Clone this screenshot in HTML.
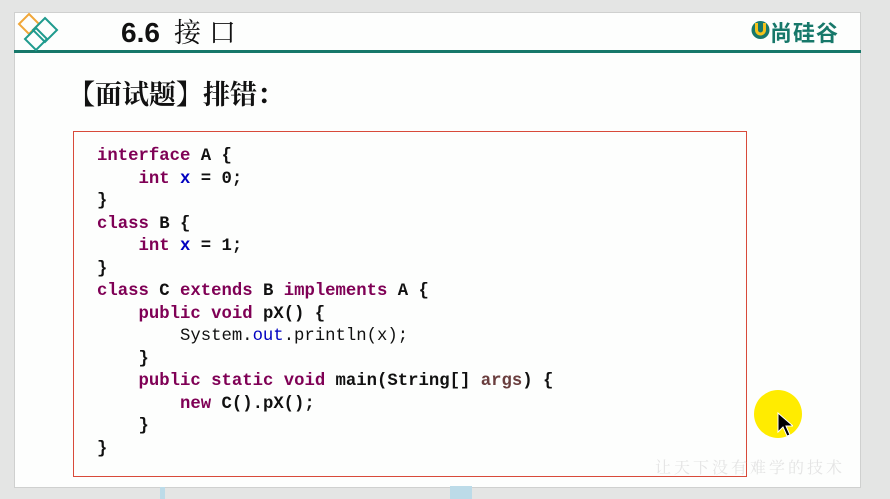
<!DOCTYPE html>
<html><head><meta charset="utf-8"><style>
*{margin:0;padding:0;box-sizing:border-box}
body{width:890px;height:499px;background:#e4e5e4;position:relative;overflow:hidden;font-family:"Liberation Sans","Noto Sans CJK SC",sans-serif}
.slide{position:absolute;left:14px;top:12px;width:847px;height:476px;background:#fdfefd;border:1px solid #cfd0cf}
.hline{position:absolute;left:14px;top:50px;width:847px;height:3px;background:#17786a}
.title{position:absolute;left:121px;top:13px;font-size:28px;font-weight:bold;color:#111;line-height:36px}
.title span{font-family:"Noto Serif CJK SC",serif;font-weight:normal;margin-left:14px;letter-spacing:8px;font-size:27px}
.q{position:absolute;left:68px;top:74px;font-size:27px;font-weight:bold;font-family:"Noto Serif CJK SC","Noto Sans CJK SC",serif;color:#111;line-height:38px}
.box{position:absolute;left:73px;top:131px;width:674px;height:346px;border:1px solid #d84a3a}
pre{position:absolute;left:97px;top:146px;font-family:"Liberation Mono",monospace;font-size:17.3px;line-height:22.5px;color:#111;font-weight:bold}
.n{font-weight:normal}
.k{color:#7f0055;font-weight:bold}.f{color:#0000c0}.a{color:#6a3e3e}
.logo{position:absolute;left:770px;top:16px;font-size:22px;color:#17786a;font-weight:bold;letter-spacing:1px}
.wm{position:absolute;left:655px;top:455px;font-size:16px;color:#e4e4e4;letter-spacing:3px;font-family:"Noto Serif CJK SC",serif}
.dot{position:absolute;left:754px;top:390px;width:48px;height:48px;border-radius:50%;background:#ffec00}
</style></head><body>
<div class="slide"></div>
<div class="hline"></div>
<svg style="position:absolute;left:0;top:0" width="70" height="55">
<polygon points="29,14 39,24 29,34 19,24" fill="none" stroke="#f0a73a" stroke-width="2"/>
<polygon points="45,18 57,30 45,42 33,30" fill="none" stroke="#1f9b8e" stroke-width="2"/>
<polygon points="36,28 47,39 36,50 25,39" fill="none" stroke="#1f9b8e" stroke-width="2"/>
</svg>
<div class="title">6.6<span>接口</span></div>
<svg style="position:absolute;left:751px;top:20px" width="19" height="20"><circle cx="9.5" cy="10" r="9" fill="#17786a"/><path d="M5.5 3v7a4 4 0 0 0 8 0V3" stroke="#f4c21c" stroke-width="3" fill="none"/></svg>
<div class="logo">尚硅谷</div>
<div class="q">【面试题】排错：</div>
<div class="box"></div>
<pre><span class="k">interface</span> A {
    <span class="k">int</span> <span class="f">x</span> = 0;
}
<span class="k">class</span> B {
    <span class="k">int</span> <span class="f">x</span> = 1;
}
<span class="k">class</span> C <span class="k">extends</span> B <span class="k">implements</span> A {
    <span class="k">public</span> <span class="k">void</span> pX() {
<span class="n">        System.<span class="f">out</span>.println(x);</span>
    }
    <span class="k">public</span> <span class="k">static</span> <span class="k">void</span> main(String[] <span class="a">args</span>) {
        <span class="k">new</span> C().pX();
    }
}</pre>
<div class="wm">让天下没有难学的技术</div>
<div class="dot"></div>
<svg style="position:absolute;left:777px;top:412px" width="16" height="26"><path d="M1 1v19l5-5 4 9 3-1-4-9h7z" fill="#000" stroke="#fff" stroke-width="1"/></svg>
<div style="position:absolute;left:160px;top:487px;width:5px;height:12px;background:#bcdbe8"></div>
<div style="position:absolute;left:450px;top:486px;width:22px;height:13px;background:#bcdbe8"></div>
</body></html>
